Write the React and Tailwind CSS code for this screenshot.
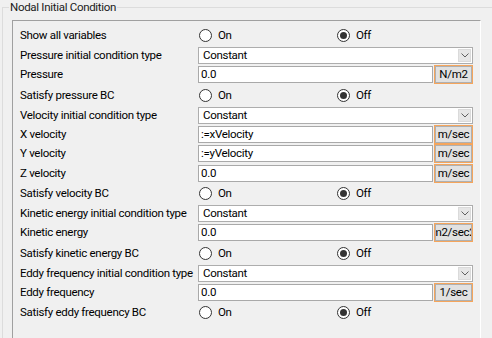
import React from 'react';

const rows = [
  { label: 'Show all variables', type: 'radio' },
  { label: 'Pressure initial condition type', type: 'combo', value: 'Constant' },
  { label: 'Pressure', type: 'text', value: '0.0', unit: 'N/m2' },
  { label: 'Satisfy pressure BC', type: 'radio' },
  { label: 'Velocity initial condition type', type: 'combo', value: 'Constant' },
  { label: 'X velocity', type: 'text', value: ':=xVelocity', unit: 'm/sec' },
  { label: 'Y velocity', type: 'text', value: ':=yVelocity', unit: 'm/sec' },
  { label: 'Z velocity', type: 'text', value: '0.0', unit: 'm/sec' },
  { label: 'Satisfy velocity BC', type: 'radio' },
  { label: 'Kinetic energy initial condition type', type: 'combo', value: 'Constant' },
  { label: 'Kinetic energy', type: 'text', value: '0.0', unit: 'm2/sec2' },
  { label: 'Satisfy kinetic energy BC', type: 'radio' },
  { label: 'Eddy frequency initial condition type', type: 'combo', value: 'Constant' },
  { label: 'Eddy frequency', type: 'text', value: '0.0', unit: '1/sec' },
  { label: 'Satisfy eddy frequency BC', type: 'radio' },
];

function Radio({ checked, label }) {
  return (
    <div className="flex items-center">
      <svg width="13" height="13" viewBox="0 0 13 13">
        <circle cx="6.5" cy="6.5" r="6" fill="#fff" stroke="#333" strokeWidth="1" />
        {checked && <circle cx="6.5" cy="6.5" r="3.5" fill="#333" />}
      </svg>
      <span className="ml-[6px]">{label}</span>
    </div>
  );
}

function RadioPair() {
  return (
    <div className="flex items-center pl-[1px]">
      <div className="w-[138px]">
        <Radio label="On" />
      </div>
      <Radio checked label="Off" />
    </div>
  );
}

function Combo({ value }) {
  return (
    <div className="flex h-[17px] w-[275px] items-stretch border border-[#adadad] bg-white">
      <div className="flex-1 pl-[4px] leading-[15px]">{value}</div>
      <div className="m-[1px] flex w-[13px] items-center justify-center border border-[#dadada] bg-[#e6e6e6]">
        <svg width="8" height="5" viewBox="0 0 8 5">
          <path d="M0.5 0.5 L4 4 L7.5 0.5" fill="none" stroke="#606060" strokeWidth="1" />
        </svg>
      </div>
    </div>
  );
}

function TextField({ value, unit }) {
  return (
    <div className="flex items-center">
      <div className="h-[17px] w-[235px] border border-[#a9a9a9] bg-white pl-[2px] leading-[15px]">
        {value}
      </div>
      <div className="ml-[1px] h-[19px] w-[39px] border border-[#f5a55c]">
        <div className="flex h-full items-center justify-center overflow-hidden whitespace-nowrap border border-[#b0b0b0] bg-[#e1e1e1]">
          {unit}
        </div>
      </div>
    </div>
  );
}

const heights = {
  radio: 'h-[21.5px]',
  combo: 'h-[18.5px]',
  text: 'h-[19.5px]',
};

export default function App() {
  return (
    <div
      className="relative h-[338px] w-[492px] overflow-hidden bg-[#f0f0f0] text-[11.5px] tracking-[-0.3px] text-black"
      style={{ fontFamily: 'Roboto, "Liberation Sans", sans-serif' }}
    >
      <div className="ml-[2px] mt-[7px] h-[400px] w-[520px] border-l border-t border-[#dcdcdc]">
        <div className="-mt-[8px] ml-[6px] w-fit bg-[#f0f0f0] px-[1px] leading-[15px] text-[#1a1a1a]">
          Nodal Initial Condition
        </div>
        <div className="ml-[9px] mt-[5px] h-[340px] w-[469px] border-l border-t border-r border-[#a0a0a0] border-r-white pl-[7px] pt-[4px]">
          {rows.map((row) => (
            <div key={row.label} className={`flex items-center ${heights[row.type]}`}>
              <div className="w-[178px] whitespace-nowrap">{row.label}</div>
              {row.type === 'radio' && <RadioPair />}
              {row.type === 'combo' && <Combo value={row.value} />}
              {row.type === 'text' && <TextField value={row.value} unit={row.unit} />}
            </div>
          ))}
        </div>
      </div>
    </div>
  );
}
